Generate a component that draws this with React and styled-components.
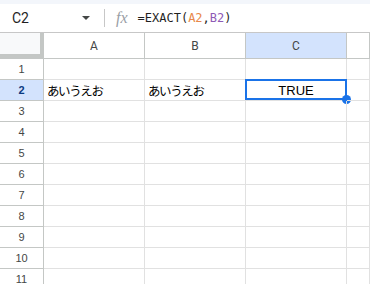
import React from "react";
import styled, { createGlobalStyle } from "styled-components";

const GlobalStyle = createGlobalStyle`
  body {
    margin: 0;
    background: #ffffff;
    font-family: "Liberation Sans", Arial, sans-serif;
    overflow: hidden;
  }
`;

const Page = styled.div`
  width: 370px;
  height: 284px;
  overflow: hidden;
  display: flex;
  flex-direction: column;
  background: #ffffff;
  & > * {
    flex-shrink: 0;
  }
`;

const TopStrip = styled.div`
  height: 4px;
  background: #f3f6fb;
`;

const FormulaBar = styled.div`
  height: 28px;
  display: flex;
  align-items: center;
  border-bottom: 1px solid #c7c7c7;
  background: #ffffff;
`;

const NameBox = styled.div`
  width: 104px;
  display: flex;
  align-items: center;
  justify-content: space-between;
  padding: 0 14px 0 12px;
  box-sizing: border-box;
  font-family: Roboto, "Liberation Sans", sans-serif;
  font-size: 14px;
  color: #1f1f1f;
`;

const Caret = styled.span`
  width: 0;
  height: 0;
  border-left: 4px solid transparent;
  border-right: 4px solid transparent;
  border-top: 4px solid #444746;
`;

const Divider = styled.div`
  width: 1px;
  height: 18px;
  background: #c7c7c7;
`;

const Fx = styled.span`
  margin: 0 10px 0 11px;
  font-family: "Liberation Serif", serif;
  font-style: italic;
  font-size: 16px;
  color: #9aa0a6;
`;

const Formula = styled.span`
  font-family: "DejaVu Sans Mono", monospace;
  font-size: 12px;
  color: #1f1f1f;
`;

const Ref = styled.span`
  color: ${(p) => p.color};
`;

const Sheet = styled.div`
  display: grid;
  grid-template-columns: 44px 101px 101px 101px 1fr;
  grid-template-rows: 26px repeat(11, 21px);
`;

const Corner = styled.div`
  background: #f8f9fa;
  box-sizing: border-box;
  border-right: 4px solid #c4c7c5;
  border-bottom: 5px solid #c4c7c5;
`;

const ColHead = styled.div`
  display: flex;
  align-items: center;
  justify-content: center;
  box-sizing: border-box;
  border-right: 1px solid #c4c7c5;
  border-bottom: 1px solid #c4c7c5;
  background: ${(p) => (p.active ? "#d3e3fd" : "#ffffff")};
  font-family: Roboto, "Liberation Sans", sans-serif;
  font-size: 12px;
  color: #444746;
`;

const RowHead = styled.div`
  display: flex;
  align-items: center;
  justify-content: center;
  box-sizing: border-box;
  border-right: 1px solid #c4c7c5;
  border-bottom: 1px solid #c4c7c5;
  background: ${(p) => (p.active ? "#d3e3fd" : "#ffffff")};
  font-family: "Liberation Sans", Arial, sans-serif;
  font-size: 11px;
  font-weight: ${(p) => (p.active ? "bold" : "normal")};
  color: ${(p) => (p.active ? "#0b3a80" : "#444746")};
`;

const Cell = styled.div`
  position: relative;
  display: flex;
  align-items: center;
  justify-content: ${(p) => (p.center ? "center" : "flex-start")};
  padding: 0 3px;
  box-sizing: border-box;
  border-right: 1px solid #e1e1e1;
  border-bottom: 1px solid #e1e1e1;
  font-family: "Liberation Sans", "Noto Sans CJK JP", sans-serif;
  font-size: 13px;
  color: #000000;
  white-space: nowrap;
`;

const Jp = styled.span`
  font-family: "Noto Sans CJK JP", sans-serif;
  font-size: 12.5px;
  letter-spacing: -1.4px;
`;

const Selection = styled.div`
  position: absolute;
  left: -1px;
  top: -1px;
  right: -1px;
  bottom: 0;
  border: 2px solid #1a73e8;
  pointer-events: none;
`;

const Handle = styled.div`
  position: absolute;
  right: -6px;
  bottom: -6px;
  width: 9px;
  height: 9px;
  border-radius: 50%;
  background: #1a73e8;
`;

const rows = [1, 2, 3, 4, 5, 6, 7, 8, 9, 10, 11];

export default function App() {
  return (
    <Page>
      <GlobalStyle />
      <TopStrip />
      <FormulaBar>
        <NameBox>
          C2
          <Caret />
        </NameBox>
        <Divider />
        <Fx>fx</Fx>
        <Formula>
          =EXACT(<Ref color="#e8884a">A2</Ref>,<Ref color="#8e5ab5">B2</Ref>)
        </Formula>
      </FormulaBar>
      <Sheet>
        <Corner />
        <ColHead>A</ColHead>
        <ColHead>B</ColHead>
        <ColHead active>C</ColHead>
        <ColHead />
        {rows.map((r) => (
          <React.Fragment key={r}>
            <RowHead active={r === 2}>{r}</RowHead>
            <Cell>{r === 2 && <Jp>あいうえお</Jp>}</Cell>
            <Cell>{r === 2 && <Jp>あいうえお</Jp>}</Cell>
            <Cell center={r === 2}>
              {r === 2 && "TRUE"}
              {r === 2 && (
                <Selection>
                  <Handle />
                </Selection>
              )}
            </Cell>
            <Cell />
          </React.Fragment>
        ))}
      </Sheet>
    </Page>
  );
}
